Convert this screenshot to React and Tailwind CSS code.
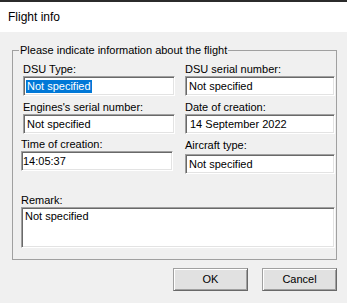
const sunken =
  'bg-white border border-t-[#a0a0a0] border-l-[#a0a0a0] border-r-white border-b-white shadow-[inset_1px_1px_0_#696969,inset_-1px_-1px_0_#e3e3e3]'

function Field({ label, className = '', boxClass = '', children }) {
  return (
    <div className={className}>
      <div className="text-[11px] leading-[13px] whitespace-nowrap">{label}</div>
      <div className={`${sunken} h-[20px] flex items-center text-[11px] leading-[13px] whitespace-nowrap overflow-hidden ${boxClass}`}>
        {children}
      </div>
    </div>
  )
}

function Button({ children }) {
  return (
    <button className="w-[75px] h-[23px] bg-[#e1e1e1] border border-t-[#a0a0a0] border-l-[#a0a0a0] border-r-[#696969] border-b-[#696969] shadow-[inset_1px_1px_0_#fff,inset_-1px_-1px_0_#a0a0a0] text-[11px] leading-[13px] text-black flex items-center justify-center">
      {children}
    </button>
  )
}

export default function App() {
  return (
    <div className="w-[347px] h-[303px] bg-[#f0f0f0] flex flex-col font-[family-name:'Liberation_Sans',Arial,sans-serif] text-black overflow-hidden">
      <div className="h-[2px] bg-[#2b2b2b]" />
      <div className="h-[30px] bg-white flex items-center pl-[8px] text-[12px] leading-4">Flight info</div>

      <div className="px-3 pt-[12px]">
        <fieldset className="border border-[#a0a0a0] w-[325px] pl-[8px] pt-[6px] pb-[11px]">
          <legend className="-ml-[2px] px-[1px] text-[11px] leading-[13px]">
            Please indicate information about the flight
          </legend>

          <div className="grid grid-cols-[154px_150px] gap-x-[10px] items-start">
            <Field className="ml-[2px]" label="DSU Type:" boxClass="pl-[2px]">
              <span className="bg-[#0078d7] text-white px-[1px]">Not specified</span>
            </Field>
            <Field label="DSU serial number:" boxClass="pl-[3px]">Not specified</Field>

            <Field className="ml-[2px] mt-[5px]" label="Engines's serial number:" boxClass="pl-[3px]">
              Not specified
            </Field>
            <Field className="mt-[5px]" label="Date of creation:" boxClass="pl-[4px]">
              14 September 2022
            </Field>

            <Field className="mr-[2px] mt-[4px]" label="Time of creation:" boxClass="pl-[1px]">
              14:05:37
            </Field>
            <Field className="mt-[5px]" label="Aircraft type:" boxClass="pl-[3px] mt-[2px]">
              Not specified
            </Field>

            <div className="col-span-2 mt-[20px]">
              <div className="text-[11px] leading-[13px]">Remark:</div>
              <div className={`${sunken} h-[41px] pl-[3px] pt-[2px] text-[11px] leading-[13px]`}>Not specified</div>
            </div>
          </div>
        </fieldset>

        <div className="flex justify-end gap-[14px] mt-[8px] mr-[-2px]">
          <Button>OK</Button>
          <Button>Cancel</Button>
        </div>
      </div>
    </div>
  )
}
